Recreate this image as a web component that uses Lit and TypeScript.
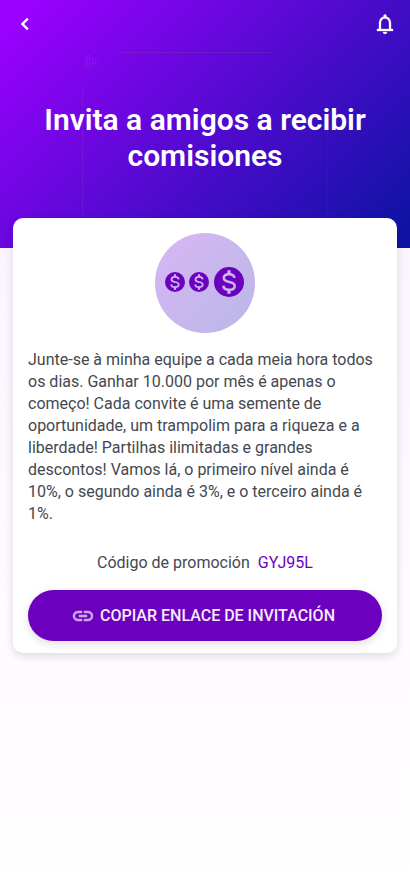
import { LitElement, html, css, svg } from "lit";
import { customElement, property } from "lit/decorators.js";

const coinPath = svg`
  <circle cx="12" cy="12" r="10" fill="currentColor" />
  <path d="M12 4.200v3M12 16.800v3" stroke="#cdb5ed" stroke-width="2.200" />
  <path d="M15.700 9.300c-.2-1.500-1.500-2.500-3.600-2.500-2.200 0-3.600 1-3.600 2.600 0 3.700 7.300 1.500 7.300 5.200 0 1.600-1.500 2.600-3.700 2.600-2.300 0-3.800-1.100-3.900-2.800" fill="none" stroke="#cdb5ed" stroke-width="1.700" />`;

@customElement("coin-icon")
export class CoinIcon extends LitElement {
  @property({ type: Boolean, reflect: true }) large = false;

  static styles = css`
    :host {
      display: block;
      width: 24px;
      height: 24px;
      color: #6c00bf;
    }
    :host([large]) {
      width: 36px;
      height: 36px;
    }
    .icon {
      display: block;
      width: 100%;
      height: 100%;
    }
  `;

  render() {
    return html`<svg class="icon" viewBox="0 0 24 24" aria-hidden="true">${coinPath}</svg>`;
  }
}

@customElement("app-root")
export class AppRoot extends LitElement {
  static styles = css`
    :host {
      display: block;
      box-sizing: border-box;
      min-height: 100vh;
      background: linear-gradient(#fbf5ff 30%, #fffcff 80%, #ffffff);
      color: #444850;
      font: 16px/22px Roboto, "Liberation Sans", sans-serif;
    }
    .hero {
      position: relative;
      padding-bottom: 74px;
      background: linear-gradient(135deg, #9c00ff 4%, #0f13a4 96%);
      color: #fff;
    }
    .ornament {
      position: absolute;
      inset: 0;
      width: 100%;
      height: 100%;
    }
    .bar {
      position: relative;
      display: flex;
      justify-content: space-between;
      padding: 12px 13px;
    }
    .icon-button {
      display: block;
      width: 24px;
      height: 24px;
      padding: 0;
      border: 0;
      background: none;
      color: inherit;
      cursor: pointer;
    }
    .icon {
      display: block;
      width: 24px;
      height: 24px;
      fill: currentColor;
    }
    .title {
      position: relative;
      margin: 0;
      padding: 54px 32px 0;
      font-size: 30px;
      line-height: 36px;
      font-weight: 600;
      text-align: center;
    }
    .card {
      position: relative;
      margin: -30px 13px 0;
      padding: 15px 15px 12px;
      border-radius: 10px;
      background: #fff;
      box-shadow: 0 3px 8px rgba(20, 20, 30, 0.14);
    }
    .emblem {
      display: flex;
      box-sizing: border-box;
      align-items: center;
      justify-content: center;
      width: 100px;
      height: 100px;
      margin: 0 auto 16px;
      padding-bottom: 2px;
      border-radius: 50%;
      background: linear-gradient(135deg, #d8b6f5, #b9b8e6);
    }
    .message {
      margin: 0;
    }
    .promo {
      display: flex;
      justify-content: center;
      gap: 8px;
      margin: 27px 0 16px;
    }
    .code {
      color: #6c00bf;
    }
    .copy {
      display: flex;
      align-items: center;
      justify-content: center;
      gap: 5px;
      width: 100%;
      height: 51px;
      padding: 0 4px 0 0;
      border: 0;
      border-radius: 26px;
      background: #6c00bf;
      box-shadow: 0 3px 8px rgba(20, 20, 30, 0.14);
      color: #f5ebfc;
      font: inherit;
      font-weight: 500;
      cursor: pointer;
    }
    .link {
      color: #cda8ea;
    }
  `;

  render() {
    return html`
      <header class="hero">
        <svg class="ornament" aria-hidden="true" fill="none" stroke="#8a3cc0">
          <path d="M120 52.500H272" stroke-dasharray="1 1" stroke-opacity=".5" />
          <path d="M272 52.500H327.500V218" stroke="#5a10c8" stroke-opacity=".3" />
          <path d="M82.500 86V218" stroke-dasharray="2 1" stroke-opacity=".4" />
          <path d="M85.500 55v12M87.500 56v10M89.500 55v10M92.500 57v8M95.500 59v6M97.500 60v2" stroke="#b030e8" stroke-dasharray="1 1" stroke-opacity=".6" />
          <path d="M84 68h8M88 65.500h5M96 68.500h2" stroke="#6928bc" stroke-width="2" stroke-dasharray="2 1" stroke-opacity=".6" />
        </svg>
        <nav class="bar">
          <button class="icon-button" aria-label="Volver">
            <svg class="icon" viewBox="0 0 24 24" aria-hidden="true">
              <path d="M15.400 7.400 14 6l-6 6 6 6 1.400-1.400L10.800 12z" stroke="currentColor" stroke-width=".5" />
            </svg>
          </button>
          <button class="icon-button" aria-label="Notificaciones">
            <svg class="icon" viewBox="0 0 24 24" aria-hidden="true">
              <path d="M12 22c1.100 0 2-.9 2-2h-4c0 1.100.9 2 2 2zm6-5v-6c0-3.070-1.630-5.640-4.500-6.320V4c0-.83-.67-1.500-1.500-1.500s-1.500.67-1.500 1.500v.68C7.640 5.360 6 7.920 6 11v6H4v2h16v-2zm-2 0H8v-6c0-2.480 1.510-4.500 4-4.500s4 2.020 4 4.500v6z" stroke="currentColor" stroke-width=".3" />
            </svg>
          </button>
        </nav>
        <h1 class="title">Invita a amigos a recibir comisiones</h1>
      </header>
      <main class="card">
        <div class="emblem">
          <coin-icon></coin-icon>
          <coin-icon></coin-icon>
          <coin-icon large></coin-icon>
        </div>
        <p class="message">
          Junte-se à minha equipe a cada meia hora todos os dias. Ganhar 10.000 por mês é apenas o
          começo! Cada convite é uma semente de oportunidade, um trampolim para a riqueza e a
          liberdade! Partilhas ilimitadas e grandes descontos! Vamos lá, o primeiro nível ainda é
          10%, o segundo ainda é 3%, e o terceiro ainda é 1%.
        </p>
        <div class="promo">
          <span>Código de promoción</span>
          <span class="code">GYJ95L</span>
        </div>
        <button class="copy">
          <svg class="icon link" viewBox="0 0 24 24" aria-hidden="true">
            <path d="M3.900 12c0-1.710 1.390-3.100 3.100-3.100h4V7H7c-2.760 0-5 2.240-5 5s2.240 5 5 5h4v-1.900H7c-1.710 0-3.100-1.390-3.100-3.100zM8 13h8v-2H8v2zm9-6h-4v1.900h4c1.710 0 3.100 1.390 3.100 3.100s-1.390 3.100-3.100 3.100h-4V17h4c2.760 0 5-2.240 5-5s-2.240-5-5-5z" stroke="currentColor" stroke-width=".5" />
          </svg>
          COPIAR ENLACE DE INVITACIÓN
        </button>
      </main>
    `;
  }
}
